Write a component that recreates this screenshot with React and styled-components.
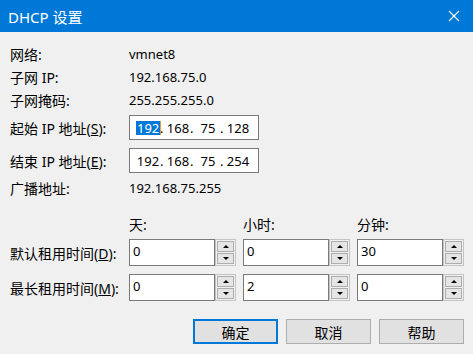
import React from 'react';
import styled, { createGlobalStyle } from 'styled-components';

const GlobalStyle = createGlobalStyle`
  html, body {
    margin: 0;
    padding: 0;
    background: #f0f0f0;
  }
  body {
    font-family: "Noto Sans", "Noto Sans CJK SC", sans-serif;
    font-size: 13px;
    color: #000;
  }
`;

const Window = styled.div`
  width: 473px;
  height: 354px;
  display: flex;
  flex-direction: column;
  background: #f0f0f0;
  overflow: hidden;
`;

const TitleBar = styled.div`
  height: 32px;
  flex: none;
  background: #0078d7;
  color: #fff;
  display: flex;
  align-items: center;
  justify-content: space-between;
  padding: 0 13px 0 8px;
  font-size: 15px;
`;

const CloseIcon = () => (
  <svg width="12" height="12" viewBox="0 0 12 12">
    <path d="M1 1 L11 11 M11 1 L1 11" stroke="#fff" strokeWidth="1.2" />
  </svg>
);

const Body = styled.div`
  padding: 10px 9px 9px 10px;
  display: flex;
  flex-direction: column;
`;

const InfoGrid = styled.div`
  display: grid;
  grid-template-columns: 119px auto;
  grid-template-rows: 23px 23px 23px 33px 33px 21px;
  align-items: center;
`;

const Label = styled.div`
  white-space: nowrap;
  font-size: 14px;
`;

const Value = styled.div`
  white-space: nowrap;
`;

const IpBox = styled.div`
  width: 130px;
  height: 25px;
  box-sizing: border-box;
  border: 1px solid #7a7a7a;
  background: #fff;
  display: flex;
  align-items: center;
  padding-left: 6px;
`;

const IpField = styled.span`
  width: 24px;
  text-align: center;
  line-height: 14px;
`;

const IpDot = styled.span`
  width: 6px;
  text-align: left;
`;

const Selected = styled.span`
  background: #0078d7;
  color: #fff;
  display: inline-block;
  padding: 0 1px;
  line-height: 14px;
  border-right: 1px solid #e0a030;
`;

const LeaseGrid = styled.div`
  margin-top: 18px;
  display: grid;
  grid-template-columns: 112px repeat(3, 107px);
  grid-template-rows: 15px 27px 27px;
  column-gap: 7px;
  row-gap: 8px;
  align-items: center;
`;

const Spin = styled.div`
  display: grid;
  grid-template-columns: 86px 21px;
  height: 27px;
`;

const SpinText = styled.div`
  box-sizing: border-box;
  border: 1px solid #7a7a7a;
  background: #fff;
  padding: 3px 0 0 3px;
  line-height: 16px;
`;

const SpinButtons = styled.div`
  box-sizing: border-box;
  border: 1px solid #c4c4c4;
  padding: 1px;
  display: flex;
  flex-direction: column;
  gap: 1px;
  background: #f0f0f0;
`;

const SpinButton = styled.div`
  flex: 1;
  border: 1px solid #adadad;
  background: #e5e5e5;
  display: flex;
  align-items: center;
  justify-content: center;
  &::after {
    content: '';
    width: 0;
    height: 0;
    border-left: 3px solid transparent;
    border-right: 3px solid transparent;
    ${(p) => (p.$down ? 'border-top: 3px solid #000;' : 'border-bottom: 3px solid #000;')}
  }
`;

const ButtonRow = styled.div`
  margin-top: 18px;
  display: flex;
  justify-content: flex-end;
  gap: 8px;
`;

const Button = styled.button`
  width: 85px;
  height: 25px;
  box-sizing: border-box;
  font-family: inherit;
  font-size: 14px;
  color: #000;
  background: #e1e1e1;
  border: ${(p) => (p.$primary ? '2px solid #0078d7' : '1px solid #adadad')};
  padding: 0;
`;

const Ip = ({ parts, select }) => (
  <IpBox>
    <IpField>{select ? <Selected>{parts[0]}</Selected> : parts[0]}</IpField>
    <IpDot>.</IpDot>
    <IpField>{parts[1]}</IpField>
    <IpDot>.</IpDot>
    <IpField>{parts[2]}</IpField>
    <IpDot>.</IpDot>
    <IpField>{parts[3]}</IpField>
  </IpBox>
);

const SpinInput = ({ value }) => (
  <Spin>
    <SpinText>{value}</SpinText>
    <SpinButtons>
      <SpinButton />
      <SpinButton $down />
    </SpinButtons>
  </Spin>
);

export default function App() {
  return (
    <Window>
      <GlobalStyle />
      <TitleBar>
        <span>DHCP 设置</span>
        <CloseIcon />
      </TitleBar>
      <Body>
        <InfoGrid>
          <Label>网络:</Label>
          <Value>vmnet8</Value>
          <Label>子网 IP:</Label>
          <Value>192.168.75.0</Value>
          <Label>子网掩码:</Label>
          <Value>255.255.255.0</Value>
          <Label>起始 IP 地址(<u>S</u>):</Label>
          <Ip parts={['192', '168', '75', '128']} select />
          <Label>结束 IP 地址(<u>E</u>):</Label>
          <Ip parts={['192', '168', '75', '254']} />
          <Label>广播地址:</Label>
          <Value>192.168.75.255</Value>
        </InfoGrid>

        <LeaseGrid>
          <span />
          <Label>天:</Label>
          <Label>小时:</Label>
          <Label>分钟:</Label>

          <Label>默认租用时间(<u>D</u>):</Label>
          <SpinInput value="0" />
          <SpinInput value="0" />
          <SpinInput value="30" />

          <Label>最长租用时间(<u>M</u>):</Label>
          <SpinInput value="0" />
          <SpinInput value="2" />
          <SpinInput value="0" />
        </LeaseGrid>

        <ButtonRow>
          <Button $primary>确定</Button>
          <Button>取消</Button>
          <Button>帮助</Button>
        </ButtonRow>
      </Body>
    </Window>
  );
}
